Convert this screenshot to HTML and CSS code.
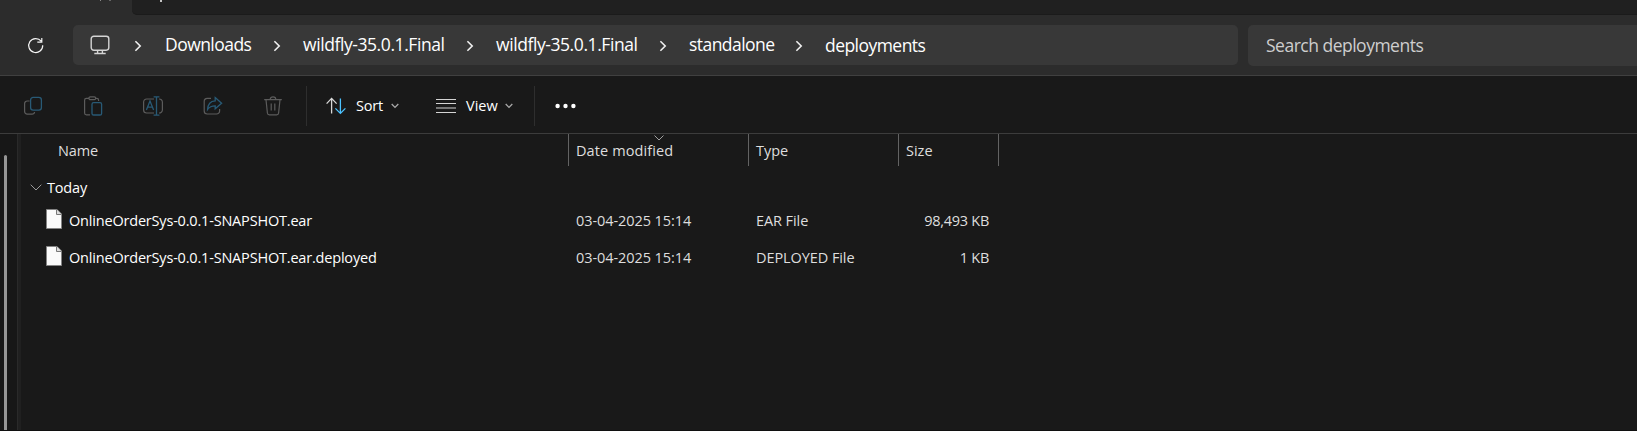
FILE: index.html
```
<!DOCTYPE html>
<html lang="en">
<head>
<meta charset="utf-8">
<title>deployments</title>
<link rel="stylesheet" href="styles.css">
</head>
<body>
<div class="window">
  <header class="top">
    <div class="tabs">
      <div class="tab-active"><i class="tick"></i><i class="tick wide"></i></div>
      <div class="tab-rest"><i class="stem"></i></div>
    </div>
    <div class="address-row">
      <div class="refresh">
        <svg width="18" height="18" viewBox="0 0 18 18"><path d="M14.2 4.2A7 7 0 1 0 15.7 8.2M14.8 1V5.2H10.3" fill="none" stroke="#f4f4f4" stroke-width="1.2"/></svg>
      </div>
      <nav class="path">
        <svg class="pc" width="20" height="20" viewBox="0 0 20 20" fill="none" stroke="#d4d4d4" stroke-width="1.4"><rect x="1.2" y="1.2" width="17.6" height="14" rx="2.6"/><path d="M7.6 15.2V18.5M12.4 15.2V18.5M4.3 18.5H15.7"/></svg>
        <svg class="chev" width="8" height="12" viewBox="0 0 8 12"><path d="M1.4 1.2 6.2 6 1.4 10.8"/></svg>
        <span class="crumb c1">Downloads</span>
        <svg class="chev" width="8" height="12" viewBox="0 0 8 12"><path d="M1.4 1.2 6.2 6 1.4 10.8"/></svg>
        <span class="crumb c2">wildfly-35.0.1.Final</span>
        <svg class="chev" width="8" height="12" viewBox="0 0 8 12"><path d="M1.4 1.2 6.2 6 1.4 10.8"/></svg>
        <span class="crumb c2">wildfly-35.0.1.Final</span>
        <svg class="chev" width="8" height="12" viewBox="0 0 8 12"><path d="M1.4 1.2 6.2 6 1.4 10.8"/></svg>
        <span class="crumb c3">standalone</span>
        <svg class="chev" width="8" height="12" viewBox="0 0 8 12"><path d="M1.4 1.2 6.2 6 1.4 10.8"/></svg>
        <span class="crumb c4">deployments</span>
      </nav>
      <div class="search">Search deployments</div>
    </div>
  </header>

  <div class="toolbar">
    <div class="actions">
      <svg width="20" height="20" viewBox="0 0 20 20"><path class="g" d="M6.6 5H4.2A2.6 2.6 0 0 0 1.6 7.6V15.6A2.6 2.6 0 0 0 4.2 18.2H9A2.6 2.6 0 0 0 11.6 16"/><rect class="b" x="7.6" y="1.4" width="10.8" height="12.8" rx="2.6"/></svg>
      <svg width="20" height="20" viewBox="0 0 20 20"><path class="g" d="M6.2 2.4H3.4A1.8 1.8 0 0 0 1.6 4.2V17A1.8 1.8 0 0 0 3.4 18.8H7M12.6 2.4H13.8A1.8 1.8 0 0 1 15.6 4.2V5"/><rect class="g" x="6" y=".8" width="6.6" height="2.8" rx="1.2"/><rect class="b" x="9" y="6.6" width="9.6" height="12.4" rx="1.6"/></svg>
      <svg width="20" height="20" viewBox="0 0 20 20"><path class="g" d="M11 3H3.6A3 3 0 0 0 .6 6V14A3 3 0 0 0 3.6 17H11M16 3A3.2 3.2 0 0 1 19.4 6V14A3.2 3.2 0 0 1 16 17"/><path class="b" d="M3.4 14 7 5 10.6 14M4.6 11.2H9.4M13.5 1V19M10.6.8H16.4M10.6 19.2H16.4"/></svg>
      <svg width="20" height="20" viewBox="0 0 20 20"><path class="g" d="M8 2.4H4.2A3 3 0 0 0 1.2 5.4V15A3 3 0 0 0 4.2 18H13.6A3 3 0 0 0 16.6 15V13"/><path class="b" d="M12.2 1.6 18.6 7.2 12.2 12.8V9.8C8.6 9.8 6.4 10.8 4.6 13.4 4.9 8.4 7.6 5 12.2 4.8Z"/></svg>
      <svg width="20" height="20" viewBox="0 0 20 20"><path class="g" d="M1.2 3.6H18.8M7.2 3.4A2.8 2.6 0 0 1 12.8 3.4M3 3.8 4.4 17A2 2 0 0 0 6.4 18.8H13.6A2 2 0 0 0 15.6 17L17 3.8M8.2 7.6V14.6M11.8 7.6V14.6"/></svg>
    </div>
    <div class="menus">
      <svg class="sort-icon" width="20" height="18" viewBox="0 0 20 18" fill="none" stroke-width="1.3"><path stroke="#d8d8d8" d="M5.6 16.6V1.6M.6 6.6 5.6 1.4 10.6 6.6"/><path stroke="#4cc2ff" d="M14.4 1.4V16.2M9.4 11.4 14.4 16.4 19.4 11.4"/></svg>
      <span class="label sort">Sort</span>
      <svg class="down" width="8" height="6" viewBox="0 0 8 6"><path d="M.7 1 4 4.4 7.3 1"/></svg>
      <svg class="view-icon" width="20" height="14" viewBox="0 0 20 14"><path d="M0 .5H20M0 4.5H20M0 9H20M0 13.5H20" stroke="#d4d4d4" stroke-width="1.2"/></svg>
      <span class="label view">View</span>
      <svg class="down" width="8" height="6" viewBox="0 0 8 6"><path d="M.7 1 4 4.4 7.3 1"/></svg>
    </div>
    <svg class="more" width="21" height="6" viewBox="0 0 21 6" fill="#fff"><circle cx="2.6" cy="3" r="2.2"/><circle cx="10.5" cy="3" r="2.2"/><circle cx="18.4" cy="3" r="2.2"/></svg>
  </div>

  <main class="body">
    <aside class="side"><div class="thumb"></div></aside>
    <div class="split"></div>
    <section class="list">
      <div class="row head">
        <div class="name">Name</div>
        <div class="date">Date modified
          <svg class="mark" width="10" height="6" viewBox="0 0 10 6"><path d="M.5.5 5 5 9.5.5"/></svg>
        </div>
        <div class="type">Type</div>
        <div class="size">Size</div>
      </div>
      <div class="group">
        <svg width="12" height="7" viewBox="0 0 12 7"><path d="M.7.7 6 6 11.3.7"/></svg>
        <span>Today</span>
      </div>
      <div class="row file">
        <div class="name"><svg width="16" height="20" viewBox="0 0 16 20"><path d="M.5.5H11L15.5 5V19.5H.5Z" fill="#fafafa" stroke="#848484"/><path d="M10.5.5V5.5H15.5" fill="#ddd" stroke="#777"/></svg><span>OnlineOrderSys-0.0.1-SNAPSHOT.ear</span></div>
        <div class="date">03-04-2025 15:14</div>
        <div class="type">EAR File</div>
        <div class="size">98,493 KB</div>
      </div>
      <div class="row file">
        <div class="name"><svg width="16" height="20" viewBox="0 0 16 20"><path d="M.5.5H11L15.5 5V19.5H.5Z" fill="#fafafa" stroke="#848484"/><path d="M10.5.5V5.5H15.5" fill="#ddd" stroke="#777"/></svg><span>OnlineOrderSys-0.0.1-SNAPSHOT.ear.deployed</span></div>
        <div class="date">03-04-2025 15:14</div>
        <div class="type">DEPLOYED File</div>
        <div class="size">1 KB</div>
      </div>
    </section>
  </main>
</div>
</body>
</html>
```
FILE: styles.css
```
* { box-sizing: border-box; }
body { margin: 0; background: #191919; font-family: "Open Sans", "Noto Sans", sans-serif; color: #fff; }
svg { display: block; flex: none; }
.window { width: 100%; height: 431px; display: flex; flex-direction: column; overflow: hidden; border-bottom: 1px solid #101010; }

.top { flex: none; height: 76px; background: #2c2c2c; border-bottom: 1px solid #404040; }
.tabs { display: flex; height: 15px; }
.tab-active { width: 132px; display: flex; padding-left: 100px; gap: 8px; }
.tick { width: 1px; height: 1px; background: #8a8a8a; }
.tick.wide { width: 2px; background: #666; }
.tab-rest { flex: 1; background: #202020; border-bottom: 1px solid #1b1b1b; border-bottom-left-radius: 5px; padding-left: 28px; }
.stem { display: block; width: 2px; height: 2px; background: #c4c4c4; }
.address-row { display: flex; padding-top: 10px; }
.refresh { width: 73px; padding: 12px 0 0 27px; }
.path { width: 1165px; height: 40px; background: #383838; border-radius: 5px; display: flex; align-items: center; padding-left: 17px; margin-right: 10px; }
.pc { margin-right: 24px; margin-top: -1px; }
.chev { fill: none; stroke: #f0f0f0; stroke-width: 1.6; margin-top: 1px; }
.crumb { font-size: 17.5px; line-height: 24px; letter-spacing: -.54px; white-space: nowrap; padding-left: 22px; margin-top: -2px; }
.c1 { width: 131px; padding-left: 23px; }
.c2 { width: 185px; letter-spacing: -.42px; }
.c3 { width: 128px; }
.c4 { margin-top: 0; }
.search { flex: 1; height: 41px; background: #383838; border-radius: 5px 0 0 5px; padding-left: 18px; font-size: 17.5px; line-height: 41px; letter-spacing: -.5px; color: #cecece; }

.toolbar { flex: none; height: 58px; border-bottom: 1px solid #3c3c3c; display: flex; align-items: center; padding-top: 2px; }
.actions { width: 307px; height: 40px; border-right: 1px solid #2e2e2e; display: flex; align-items: center; gap: 40px; padding: 1px 0 0 23px; }
.g { fill: none; stroke: #5c5c5c; stroke-width: 1.2; }
.b { fill: none; stroke: #285a76; stroke-width: 1.3; }
.menus { width: 228px; height: 40px; border-right: 1px solid #2e2e2e; display: flex; align-items: center; padding-left: 19px; }
.label { font-size: 14.5px; line-height: 20px; letter-spacing: -.2px; padding-top: 1px; }
.sort { margin-left: 10px; width: 35px; }
.view { margin-left: 10px; width: 39px; letter-spacing: 0; }
.view-icon { margin-left: 37px; }
.down { fill: none; stroke: #a8a8a8; stroke-width: 1.3; }
.more { margin-left: 20px; }

.body { flex: 1; min-height: 0; display: flex; font-size: 14.5px; letter-spacing: -.19px; }
.side { width: 17px; padding: 21px 0 0 4px; background: #171717; }
.thumb { width: 3px; height: 100%; background: #969696; border-radius: 2px 2px 0 0; }
.split { width: 4px; background: #202020; border-left: 1px solid #2a2a2a; }
.list { flex: 1; }
.row { display: grid; grid-template-columns: 548px 180px 150px 100px; }
.head { height: 32px; grid-template-rows: 32px; line-height: 34px; color: #dedede; letter-spacing: 0; }
.head > div { border-right: 1px solid #636363; padding-left: 7px; position: relative; }
.head .name { padding-left: 37px; letter-spacing: -.1px; }
.head .date { letter-spacing: .1px; }
.head .size { letter-spacing: 0; }
.mark { position: absolute; left: 85px; top: 1px; fill: none; stroke: #a0a0a0; }
.group { height: 37px; margin-top: 3px; margin-bottom: 1px; display: flex; align-items: center; padding-left: 9px; }
.group svg { fill: none; stroke: #9a9a9a; }
.group span { margin-left: 5px; }
.file { height: 37px; line-height: 28px; color: #dedede; }
.file > div { padding-left: 7px; }
.file .name { display: flex; padding-left: 25px; gap: 7px; color: #fff; }
.file .name svg { margin-top: 2px; }
.file .date { letter-spacing: -.08px; }
.file .type { letter-spacing: -.08px; }
.file .size { text-align: right; padding-right: 10px; letter-spacing: -.28px; }
```
